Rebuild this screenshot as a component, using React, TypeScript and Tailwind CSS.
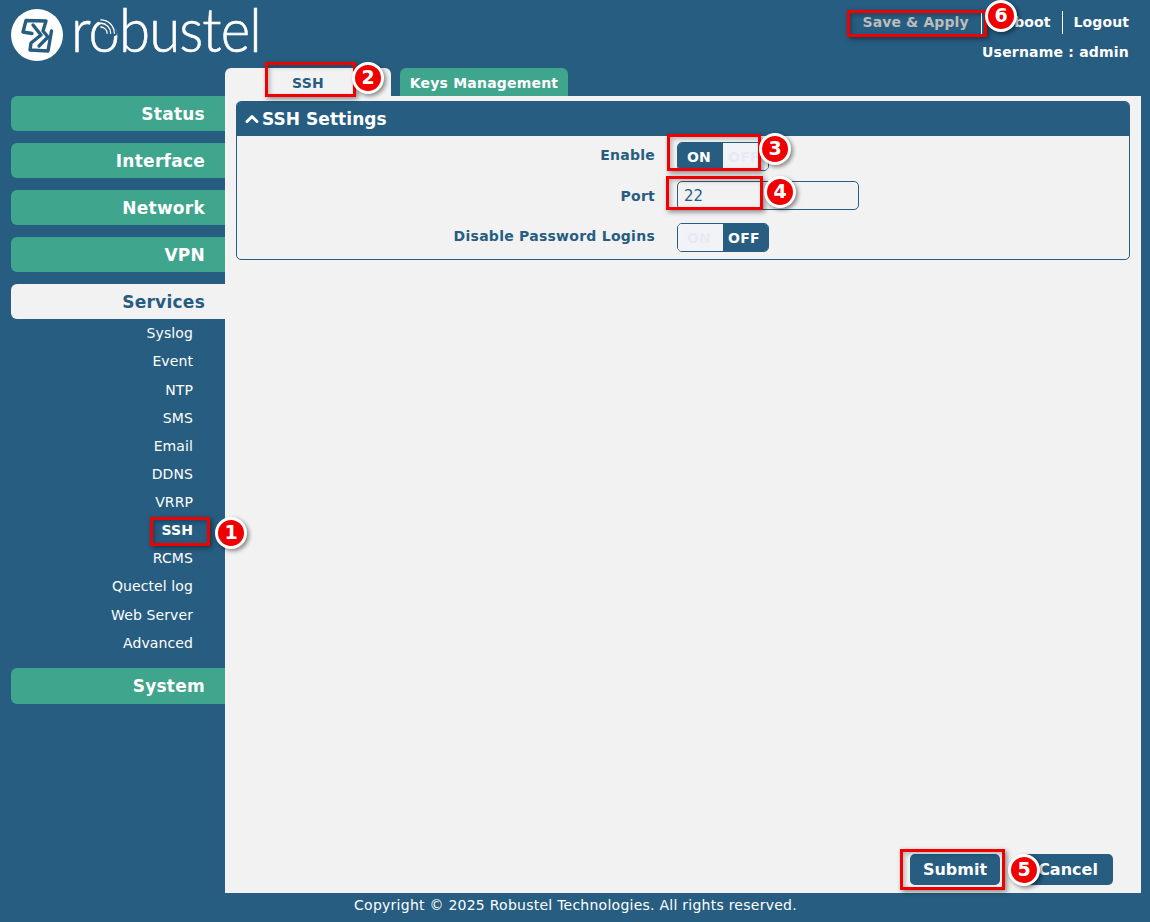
import React from "react";
import { ChevronUp } from "lucide-react";

const mainItems = ["Status", "Interface", "Network", "VPN"];
const subItems = ["Syslog", "Event", "NTP", "SMS", "Email", "DDNS", "VRRP", "SSH", "RCMS", "Quectel log", "Web Server", "Advanced"];

const NavButton = ({ label, active, tall }: { label: string; active?: boolean; tall?: boolean }) => (
  <div
    className={`flex items-center justify-end pr-5 rounded-l-md text-[17px] tracking-[0.25px] font-bold ${tall ? "h-[36px] pt-[0px]" : "h-[35px] pt-[2px]"} ${
      active ? "bg-[#f2f2f2] text-[#265d80]" : "bg-[#3fa58c] text-white"
    }`}
  >
    {label}
  </div>
);

const Toggle = ({ on }: { on: boolean }) => (
  <div className="w-[92px] h-[29px] flex rounded-[5px] border border-[#265d80] overflow-hidden text-sm font-bold tracking-[0.25px]">
    <div className={`w-[45px] flex items-center justify-center pr-[3px] ${on ? "bg-[#265d80] text-white" : "bg-[#f2f3f7] text-[#e8e9f5] rounded-r-[5px]"}`}>ON</div>
    <div className={`flex-1 flex items-center justify-center pr-[3px] ${on ? "bg-[#f2f3f7] text-[#e8e9f5]" : "bg-[#265d80] text-white"}`}>OFF</div>
  </div>
);

const Callout = ({ n, box, dot }: { n: number; box: string; dot: string }) => (
  <>
    <div className={`absolute border-[3px] border-[#f00000] shadow-[2px_2px_5px_rgba(0,0,0,0.45),inset_2px_2px_4px_rgba(0,0,0,0.25)] ${box}`} />
    <div className={`absolute w-[32px] h-[32px] rounded-full bg-[#f00000] border-[3px] border-white shadow-[2px_2px_4px_rgba(0,0,0,0.45)] flex items-center justify-center text-white text-[19px] font-bold ${dot}`}>
      {n}
    </div>
  </>
);

const Logo = () => (
  <div className="flex pl-[11px] pt-[9px]">
    <svg width="52" height="52" viewBox="11 9 52 52">
      <circle cx="37" cy="35" r="26" fill="#fff" />
      <g fill="none" stroke="#265d80" strokeWidth="3.4" strokeLinejoin="round" strokeLinecap="round">
        <path d="M32 33.5 L23 32 L26 20.5 L46 21 L43 31 L48 37 L39 46" />
        <path d="M33 25 L41 35 L31 43 L30 50 L48 51 L51.5 31" />
      </g>
    </svg>
    <div className="relative ml-[8px] w-[190px] h-[52px]">
      <span className="absolute left-0 -top-[6px] origin-left scale-x-[0.91] text-[62px] leading-[50px] font-light tracking-[-1px] text-white [-webkit-text-stroke:0.6px_white] font-['Lato',sans-serif]">
        robustel
      </span>
      <svg className="absolute left-[28px] top-[9px]" width="18" height="18" viewBox="0 0 20 20" fill="none" strokeLinecap="round">
        <path d="M2 2 A15 15 0 0 1 17 17" stroke="#265d80" strokeWidth="6" />
        <path d="M2 2 A15 15 0 0 1 17 17 M2 6 A11 11 0 0 1 13 17 M2 10 A7 7 0 0 1 9 17" stroke="#fff" strokeWidth="1.4" />
      </svg>
    </div>
  </div>
);

export default function App() {
  return (
    <div className="relative h-screen min-h-[922px] overflow-hidden bg-[#265d80] font-['DejaVu_Sans',sans-serif] text-sm flex flex-col">
      <header className="h-[68px] flex justify-between">
        <Logo />
        <div className="pr-[21px] pt-[11px] flex flex-col items-end font-bold text-white">
          <div className="flex items-center h-[23px] tracking-[0.1px]">
            <span className="text-[#bcbcbc] pr-[12px] border-r border-white h-[23px] leading-[23px]">Save &amp; Apply</span>
            <span className="pl-[12px] pr-[11px] border-r border-white h-[23px] leading-[23px]">Reboot</span>
            <span className="pl-[11px] h-[23px] leading-[23px]">Logout</span>
          </div>
          <div className="mt-[7px] leading-[22px] tracking-[0.2px]">Username : admin</div>
        </div>
      </header>

      <div className="flex-1 flex min-h-0">
        <aside className="w-[225px] pl-[11px] pt-[28px]">
          <div className="flex flex-col gap-3">
            {mainItems.map((m) => (
              <NavButton key={m} label={m} />
            ))}
            <NavButton label="Services" active />
          </div>
          <div className="flex flex-col pr-[32px] pt-[0.3px] pb-[0.2px] text-white tracking-[0.1px]">
            {subItems.map((s) => (
              <div key={s} className={`h-[28.125px] flex items-center justify-end ${s === "SSH" ? "font-bold" : ""}`}>
                {s}
              </div>
            ))}
          </div>
          <div className="mt-[11px]">
            <NavButton label="System" tall />
          </div>
        </aside>

        <main className="w-[916px] flex flex-col">
          <div className="h-[28px] flex font-bold shrink-0 tracking-[0.2px]">
            <div className="w-[166px] bg-[#f2f2f2] rounded-t-md text-[#265d80] flex items-center justify-center pt-[2px]">SSH</div>
            <div className="ml-[9px] w-[168px] bg-[#3fa58c] rounded-t-md text-white flex items-center justify-center pt-[2px]">Keys Management</div>
          </div>
          <div className="h-[797px] bg-[#f2f2f2] pl-[11px] pr-[11px] pt-[5px] flex flex-col">
            <section className="h-[159px] border border-[#265d80] rounded-[5px] overflow-hidden">
              <div className="h-[34px] bg-[#265d80] text-white flex items-center pl-[5px] text-[17px] font-bold tracking-[0.05px]">
                <ChevronUp size={20} strokeWidth={3.5} />
                SSH Settings
              </div>
              <div className="grid grid-cols-[418px_auto] gap-x-[22px] justify-start items-center text-[#265d80] pt-[6px]">
                <div className="h-[29px] flex items-center justify-end font-bold tracking-[0.25px] -mt-[4px]">Enable</div>
                <Toggle on />
                <div className="h-[28px] mt-[10px] flex items-center justify-end font-bold tracking-[0.25px]">Port</div>
                <input
                  readOnly
                  value="22"
                  className="mt-[10px] w-[182px] h-[29px] px-[6px] rounded-[5px] border border-[#265d80] bg-[#f2f2f2] text-[15px] text-[#265d80] outline-none"
                />
                <div className="h-[29px] mt-[13px] flex items-center justify-end font-bold tracking-[0.26px] -translate-y-[2px]">Disable Password Logins</div>
                <div className="mt-[13px]">
                  <Toggle on={false} />
                </div>
              </div>
            </section>
            <div className="mt-auto pb-[8px] pr-[17px] flex justify-end gap-[23px]">
              <button className="w-[90px] h-[31px] rounded-[5px] bg-[#265d80] text-white text-[16px] font-bold pt-[1px]">Submit</button>
              <button className="w-[90px] h-[31px] rounded-[5px] bg-[#265d80] text-white text-[16px] font-bold pt-[1px]">Cancel</button>
            </div>
          </div>
        </main>
      </div>

      <footer className="h-[29px] pl-[1px] text-white text-center leading-[24px] tracking-[0.25px]">
        Copyright © 2025 Robustel Technologies. All rights reserved.
      </footer>

      <Callout n={1} box="left-[150px] top-[517px] w-[60px] h-[29px]" dot="left-[215px] top-[517px]" />
      <Callout n={2} box="left-[265px] top-[62px] w-[91px] h-[35px]" dot="left-[352px] top-[62px]" />
      <Callout n={3} box="left-[667px] top-[134px] w-[94px] h-[37px]" dot="left-[759px] top-[133px]" />
      <Callout n={4} box="left-[666px] top-[176px] w-[97px] h-[34px]" dot="left-[764px] top-[176px]" />
      <Callout n={5} box="left-[900px] top-[849px] w-[105px] h-[41px]" dot="left-[1008px] top-[854px]" />
      <Callout n={6} box="left-[847px] top-[10px] w-[140px] h-[27px]" dot="left-[985px] top-[0px]" />
    </div>
  );
}
